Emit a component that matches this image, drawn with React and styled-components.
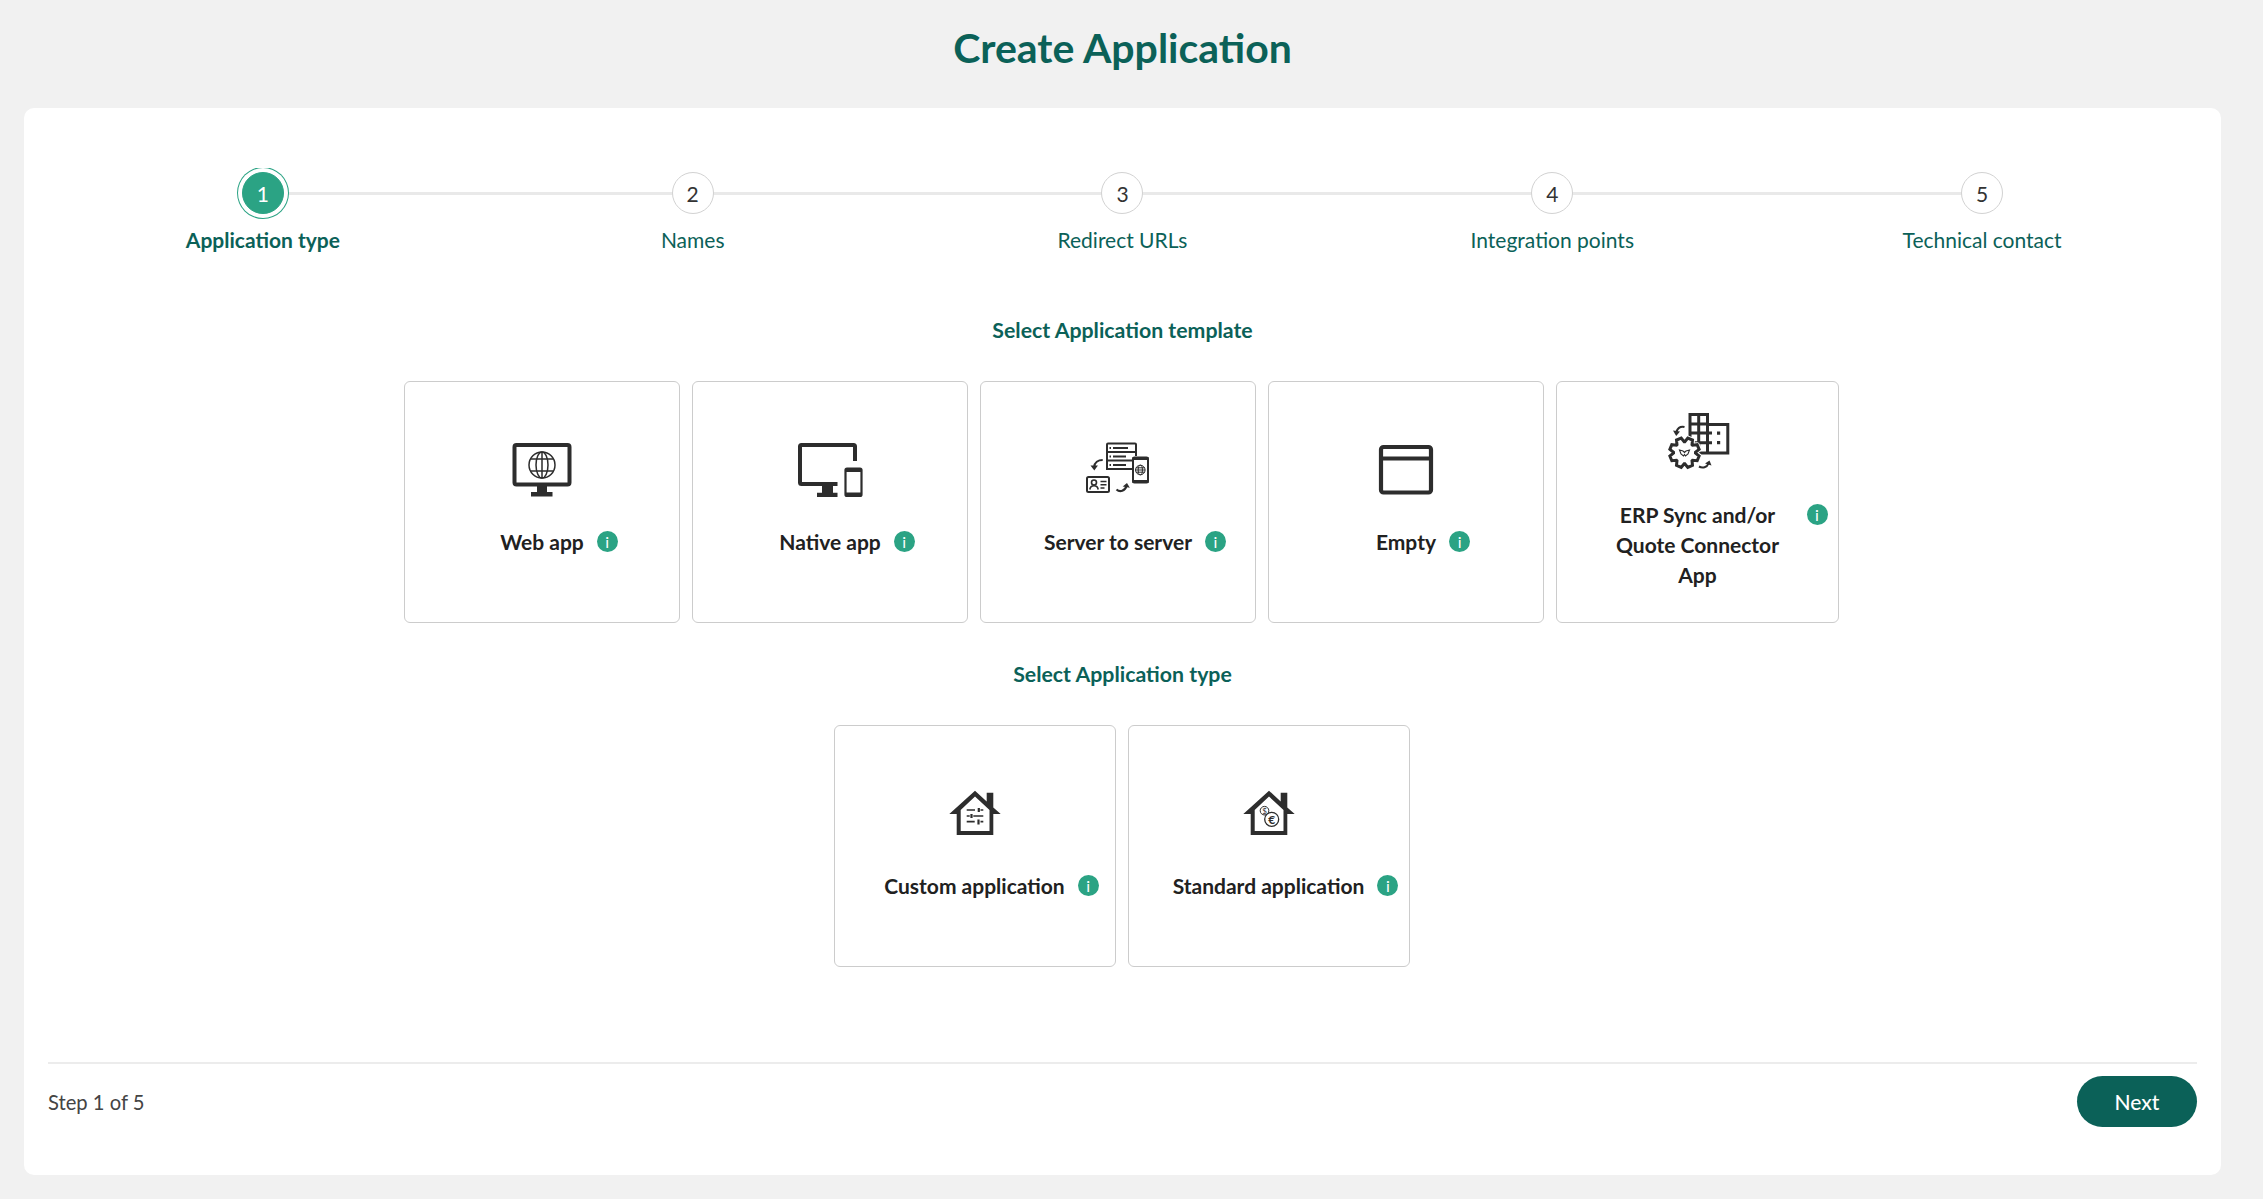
import React from "react";
import styled, { createGlobalStyle } from "styled-components";

const GlobalStyle = createGlobalStyle`
  * {
    box-sizing: border-box;
  }
  body {
    margin: 0;
    background: #f1f1f1;
    font-family: Lato, "Liberation Sans", sans-serif;
  }
`;

const Page = styled.div`
  min-height: 1199px;
  padding: 0 42px 24px 24px;
  display: flex;
  flex-direction: column;
`;

const Title = styled.h1`
  margin: 0;
  height: 108px;
  padding-top: 24px;
  text-align: center;
  font-size: 41px;
  line-height: 48px;
  font-weight: 700;
  color: #0b6158;
`;

const Panel = styled.main`
  flex: 1;
  display: flex;
  flex-direction: column;
  background: #fff;
  border-radius: 10px;
  padding: 60px 24px 48px;
`;

const Stepper = styled.ol`
  list-style: none;
  margin: 0;
  padding: 4px 0 0;
  display: grid;
  grid-template-columns: repeat(5, 1fr);
  overflow: hidden;
`;

const Step = styled.li`
  position: relative;
  display: flex;
  flex-direction: column;
  align-items: center;
  &:not(:last-child)::after {
    content: "";
    position: absolute;
    top: 20px;
    left: 50%;
    width: 100%;
    height: 3px;
    background: #e9e9e9;
  }
`;

const StepCircle = styled.span`
  position: relative;
  z-index: 1;
  width: 42px;
  height: 42px;
  border-radius: 50%;
  display: flex;
  align-items: center;
  justify-content: center;
  font-size: 21px;
  color: ${(p) => (p.$active ? "#fff" : "#333")};
  background: ${(p) => (p.$active ? "#2ba384" : "#fff")};
  border: 1px solid ${(p) => (p.$active ? "#2ba384" : "#d2d2d2")};
  box-shadow: ${(p) => (p.$active ? "0 0 0 4px #fff, 0 0 0 5px #2ba384" : "none")};
`;

const StepLabel = styled.span`
  margin-top: 11px;
  font-size: 21px;
  line-height: 30px;
  font-weight: ${(p) => (p.$active ? 700 : 400)};
  color: #0b6158;
`;

const SectionTitle = styled.h2`
  margin: ${(p) => (p.$first ? "60px" : "36px")} 0 36px;
  text-align: center;
  font-size: 21.3px;
  line-height: 30px;
  font-weight: 700;
  color: #0b6158;
`;

const CardRow = styled.div`
  display: flex;
  justify-content: center;
  gap: 12px;
  padding-right: 2px;
`;

const Card = styled.div`
  width: ${(p) => p.$width}px;
  height: 242px;
  flex: none;
  display: flex;
  flex-direction: column;
  align-items: center;
  justify-content: center;
  gap: ${(p) => (p.$tall ? 26 : 25)}px;
  padding-bottom: ${(p) => (p.$tall ? 4 : 10)}px;
  background: #fff;
  border: 1px solid #cccccc;
  border-radius: 6px;
`;

const CardIcon = styled.svg`
  width: 64px;
  height: 64px;
  flex: none;
  overflow: visible;
  color: #2d2d2d;
`;

const CardLabel = styled.div`
  position: relative;
  max-width: 192px;
  text-align: center;
  font-size: 21px;
  line-height: 30px;
  font-weight: 700;
  color: #212121;
`;

const Info = styled.span`
  position: absolute;
  top: 4px;
  left: calc(100% + 13px);
  width: 21px;
  height: 21px;
  border-radius: 50%;
  background: #2ba384;
  color: #fff;
  font-size: 16px;
  line-height: 21px;
  font-weight: 400;
  text-align: center;
`;

const Footer = styled.footer`
  margin-top: auto;
  padding-top: 12px;
  border-top: 2px solid #ececec;
  display: flex;
  align-items: center;
  justify-content: space-between;
`;

const StepCount = styled.span`
  font-size: 20.2px;
  color: #444;
`;

const NextButton = styled.button`
  width: 120px;
  height: 51px;
  border: none;
  border-radius: 26px;
  background: #0b6158;
  color: #fff;
  font-family: inherit;
  font-size: 21px;
  font-weight: 500;
  cursor: pointer;
`;

const WebIcon = () => (
  <CardIcon viewBox="0 0 64 64" fill="none" stroke="currentColor">
    <rect x="4.500" y="7" width="55" height="39.500" rx="2" strokeWidth="4" />
    <path d="M27 48h10v6H27z M21 54h21.500v4.500H21z" fill="currentColor" stroke="none" />
    <g strokeWidth="1.500">
      <circle cx="32" cy="27" r="13" />
      <ellipse cx="32" cy="27" rx="6" ry="13" />
      <path d="M32 14v26M20.500 21h23M20.500 33h23" />
    </g>
  </CardIcon>
);

const NativeIcon = () => (
  <CardIcon viewBox="0 0 64 64" fill="none" stroke="currentColor">
    <path d="M57 23V8.500a1.500 1.500 0 0 0-1.500-1.500H3.500A1.500 1.500 0 0 0 2 8.500v36A1.500 1.500 0 0 0 3.500 46h36" strokeWidth="4" />
    <path d="M24 48h11v7H24z M19 54.700h20.500V59H19z" fill="currentColor" stroke="none" />
    <rect x="47.500" y="30.500" width="16" height="27.500" rx="1.500" strokeWidth="2.200" />
    <path d="M47 31h17v3H47z M47 54.500h17V58H47z" fill="currentColor" stroke="none" />
  </CardIcon>
);

const ServerIcon = () => (
  <CardIcon viewBox="0 0 64 64" fill="none" stroke="currentColor" strokeWidth="2">
    <path d="M46 31H21V6.500a1 1 0 0 1 1-1h27a1 1 0 0 1 1 1V18" />
    <path d="M21 14h29M21 22.500h25" />
    <path d="M27 10h15M27 18.500h13M27 27h13" strokeWidth="1.800" />
    <path d="M23.500 10h1.500M23.500 18.500h1.500M23.500 27h1.500" strokeWidth="1.800" />
    <rect x="47" y="19.500" width="15" height="25" rx="1.500" />
    <path d="M46.500 19h16v3h-16z M46.500 42h16v3h-16z" fill="currentColor" stroke="none" />
    <g strokeWidth="1">
      <circle cx="54.300" cy="32" r="4.800" />
      <ellipse cx="54.300" cy="32" rx="2.100" ry="4.800" />
      <path d="M49.500 32h9.600M50 29.800h8.600M50 34.200h8.600" />
    </g>
    <rect x="1" y="39" width="22" height="15" rx="1.500" />
    <circle cx="8" cy="44.500" r="2.500" strokeWidth="1.600" />
    <path d="M3.800 51.500c.4-2.500 2-3.700 4.200-3.700s3.800 1.200 4.200 3.700" strokeWidth="1.600" />
    <path d="M14.500 43.500h6M14.500 46.800h6M14.500 50h4" strokeWidth="1.400" />
    <path d="M16.700 22c-4.500 0-8.200 2.500-8.500 7" strokeWidth="2.200" />
    <path d="M4.500 27.500l3.800 5 3.600-5z" fill="currentColor" stroke="none" />
    <path d="M30.500 51.500c3.500 3 8.500 1.500 10-3.500" strokeWidth="2.200" />
    <path d="M36.700 48.500l4.300-3.500 2.800 4.800z" fill="currentColor" stroke="none" />
  </CardIcon>
);

const EmptyIcon = () => (
  <CardIcon viewBox="0 0 64 64" fill="none" stroke="currentColor" strokeWidth="4.200">
    <rect x="7" y="9" width="50" height="45.500" rx="2.500" />
    <path d="M7 20.500h50" />
  </CardIcon>
);

// 8 tooth gear outline
const gearPath = (cx, cy, outer, inner) => {
  const pts = [];
  for (let i = 0; i < 8; i++) {
    const a = (i * Math.PI) / 4 + Math.PI / 8;
    [
      [-0.36, inner],
      [-0.17, outer],
      [0.17, outer],
      [0.36, inner],
    ].forEach(([d, r]) => {
      pts.push(`${(cx + r * Math.cos(a + d)).toFixed(2)} ${(cy + r * Math.sin(a + d)).toFixed(2)}`);
    });
  }
  return `M${pts.join("L")}Z`;
};

const ErpIcon = () => (
  <CardIcon viewBox="0 0 64 64" fill="none" stroke="currentColor">
    <g strokeWidth="3">
      <path d="M24 42.700V4.500h17.500v38" />
      <path d="M41.500 14.500h20.300v28.500H24" />
      <path d="M32.700 4.500v32M24 14h17.500M24 23h22M24 32.700h22" />
    </g>
    <path d="M51 21.500h3.200v3.200H51z M51 31h3.200v3.200H51z" fill="currentColor" stroke="none" />
    <path d={gearPath(18.5, 42.7, 15, 11)} fill="#fff" stroke="#fff" strokeWidth="5" strokeLinejoin="round" />
    <path d={gearPath(18.5, 42.7, 15, 11)} fill="#fff" strokeWidth="3" strokeLinejoin="miter" />
    <path d="M13.500 40l3.500 1 1.500 1.500 1.500-1.500 3.500-1-1.500 4-2.500 2-1-1.500-1 1.500-2.500-2z" strokeWidth="1.100" />
    <path d="M18.500 17c-3.200-.7-6.500.8-8 4.500" strokeWidth="2.100" />
    <path d="M7 20.500l3.200 5.500 3.800-4.500z" fill="currentColor" stroke="none" />
    <path d="M33 56.500c3.500 2 8 1 9.500-3" strokeWidth="2.100" />
    <path d="M39 53.500l4.500-3 2 5z" fill="currentColor" stroke="none" />
  </CardIcon>
);

// the house outline is shared, only what sits inside changes
const House = ({ children }) => (
  <CardIcon viewBox="0 1 64 64" fill="none" stroke="currentColor">
    <path
      fillRule="evenodd"
      fill="currentColor"
      stroke="none"
      d="M32 9.700L43.700 20.500V11.700H50.300V26.500L57.700 33H50.300V54H13.700V33H6.300Z M32 15.500L17.700 29V50H46.500V29Z"
    />
    {children}
  </CardIcon>
);

const CustomIcon = () => (
  <House>
    <path d="M23.700 29h8.300M37.500 29h2.800M23.700 35h3M30.300 35h10M23.700 40.700h8M37.500 40.700h2.800" strokeWidth="1.700" />
    <path d="M35.800 27v4M28.500 33v4M35.500 38.500v5" strokeWidth="2.200" />
  </House>
);

const CoinText = styled.text`
  font-family: Lato, "Liberation Sans", sans-serif;
  text-anchor: middle;
  fill: #2d2d2d;
  stroke: none;
`;

const StandardIcon = () => (
  <House>
    <circle cx="27.500" cy="29.700" r="4.300" strokeWidth="1" />
    <CoinText x="27.500" y="32.500" fontSize="8">$</CoinText>
    <circle cx="34.700" cy="38.300" r="7" fill="#fff" strokeWidth="1.300" />
    <CoinText x="34.700" y="42.500" fontSize="12" fontWeight="700">€</CoinText>
  </House>
);

const steps = ["Application type", "Names", "Redirect URLs", "Integration points", "Technical contact"];

const templates = [
  { name: "Web app", icon: WebIcon, width: 276 },
  { name: "Native app", icon: NativeIcon, width: 276 },
  { name: "Server to server", icon: ServerIcon, width: 276 },
  { name: "Empty", icon: EmptyIcon, width: 276 },
  { name: "ERP Sync and/or Quote Connector App", icon: ErpIcon, width: 283, tall: true },
];

const types = [
  { name: "Custom application", icon: CustomIcon, width: 282 },
  { name: "Standard application", icon: StandardIcon, width: 282 },
];

const OptionCard = ({ option }) => {
  const Icon = option.icon;
  return (
    <Card $width={option.width} $tall={option.tall}>
      <Icon />
      <CardLabel>
        {option.name}
        <Info>i</Info>
      </CardLabel>
    </Card>
  );
};

const App = () => {
  return (
    <Page>
      <GlobalStyle />
      <Title>Create Application</Title>
      <Panel>
        <Stepper>
          {steps.map((step, i) => (
            <Step key={step}>
              <StepCircle $active={i === 0}>{i + 1}</StepCircle>
              <StepLabel $active={i === 0}>{step}</StepLabel>
            </Step>
          ))}
        </Stepper>

        <SectionTitle $first>Select Application template</SectionTitle>
        <CardRow>
          {templates.map((t) => (
            <OptionCard key={t.name} option={t} />
          ))}
        </CardRow>

        <SectionTitle>Select Application type</SectionTitle>
        <CardRow>
          {types.map((t) => (
            <OptionCard key={t.name} option={t} />
          ))}
        </CardRow>

        <Footer>
          <StepCount>Step 1 of 5</StepCount>
          <NextButton>Next</NextButton>
        </Footer>
      </Panel>
    </Page>
  );
};

export default App;
